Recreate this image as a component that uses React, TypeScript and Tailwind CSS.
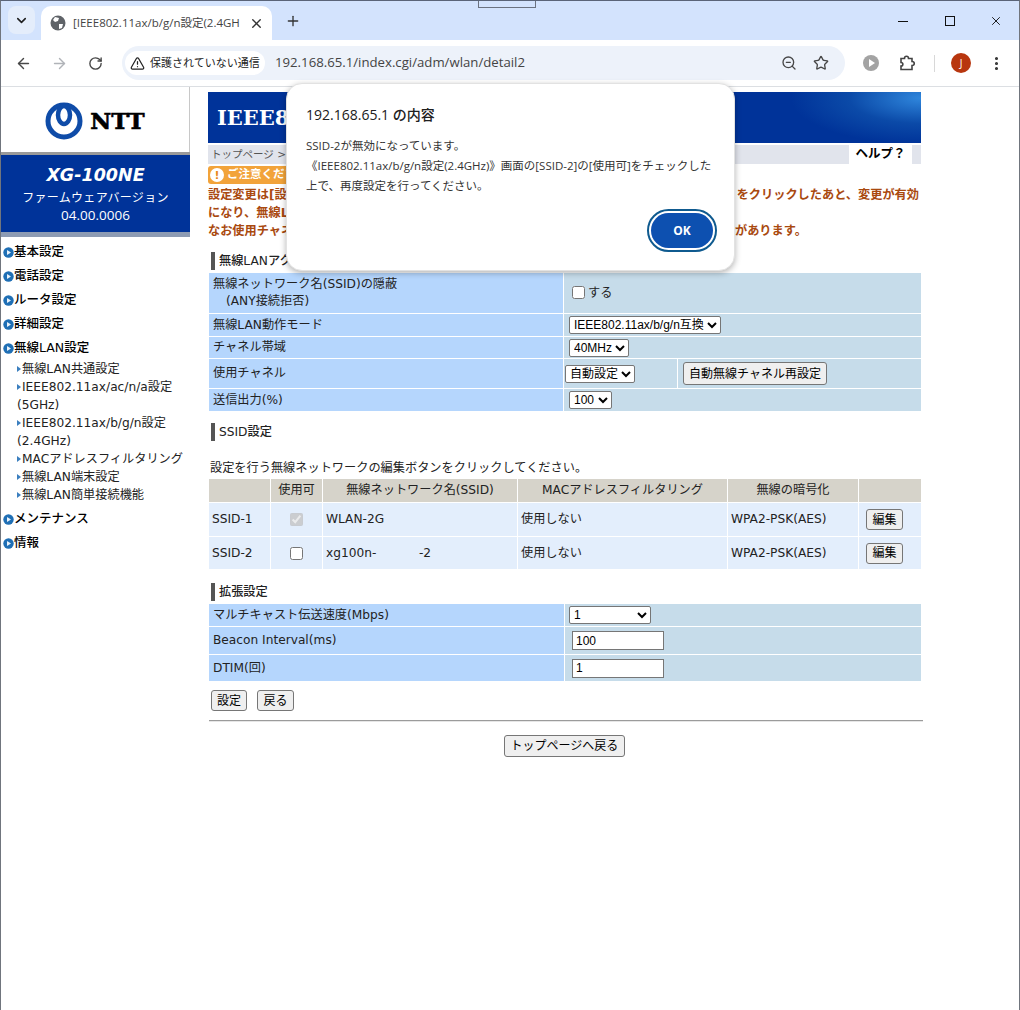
import { ArrowLeft, ArrowRight, ChevronDown, MoreVertical, Plus, RotateCw, Star, TriangleAlert, X, ZoomOut } from "lucide-react"

const mainMenu1 = ["基本設定", "電話設定", "ルータ設定", "詳細設定", "無線LAN設定"]
const subMenu = [
  "無線LAN共通設定",
  "IEEE802.11ax/ac/n/a設定 (5GHz)",
  "IEEE802.11ax/b/g/n設定 (2.4GHz)",
  "MACアドレスフィルタリング",
  "無線LAN端末設定",
  "無線LAN簡単接続機能",
]
const mainMenu2 = ["メンテナンス", "情報"]

function MenuItem({ label }: { label: string }) {
  return (
    <div className="flex h-[24px] items-center text-[12.5px] font-medium text-black">
      <svg width="11" height="11" viewBox="0 0 11 11" className="ml-[2px] shrink-0">
        <circle cx="5.5" cy="5.5" r="5.2" fill="#1f6fb5" />
        <path d="M4 3 L8 5.5 L4 8 Z" fill="#e8f2fb" />
      </svg>
      <span>{label}</span>
    </div>
  )
}

function Sidebar() {
  return (
    <div className="w-[189px] shrink-0">
      <div className="flex h-[65px] items-center justify-center gap-[7px] border-r border-[#c8c8c8] bg-white pt-[2px]">
        <svg width="38" height="38" viewBox="0 0 38 38">
          <circle cx="19" cy="19" r="16" fill="none" stroke="#0f4ca8" strokeWidth="5" />
          <ellipse cx="19" cy="13" rx="6" ry="9" fill="none" stroke="#0f4ca8" strokeWidth="4.5" />
        </svg>
        <span className="font-['DejaVu_Serif'] text-[23px] leading-none font-black text-black [-webkit-text-stroke:0.6px_black]">NTT</span>
      </div>
      <div className="h-[3px] bg-[#9a9a9a]" />
      <div className="flex h-[77px] flex-col items-center bg-[#003399] pt-[9px] text-white">
        <div className="text-[17.5px] leading-[22px] font-bold italic">XG-100NE</div>
        <div className="mt-[2px] font-['Noto_Sans_CJK_JP'] text-[12px] leading-[18px] tracking-[0.3px]">ファームウェアバージョン</div>
        <div className="font-['Open_Sans'] text-[13.5px] leading-[18px]">04.00.0006</div>
      </div>
      <div className="h-[5px] bg-[#8d9bb3]" />
      <div className="pt-[3px]">
        {mainMenu1.map((m) => (
          <MenuItem key={m} label={m} />
        ))}
        <div className="pb-[3px] pl-[15px] text-[12.2px] leading-[18px] text-[#222]">
          {subMenu.map((s) => (
            <div key={s} className="relative pl-[6px]">
              <span className="absolute top-[6px] left-[1px] h-0 w-0 border-y-[3px] border-l-[4px] border-y-transparent border-l-[#3b7fbf]" />
              {s.includes(" ") ? (
                <>
                  {s.split(" ")[0]}
                  <div className="-ml-[5px]">{s.split(" ")[1]}</div>
                </>
              ) : (
                s
              )}
            </div>
          ))}
        </div>
        {mainMenu2.map((m) => (
          <MenuItem key={m} label={m} />
        ))}
      </div>
    </div>
  )
}

function Heading({ label, className }: { label: string; className: string }) {
  return (
    <div className={`flex h-[18px] items-center gap-[4px] pl-[3px] text-[12.2px] font-medium text-[#222] ${className}`}>
      <span className="h-[18px] w-[4px] bg-[#555]" />
      {label}
    </div>
  )
}

function Select({ value, className }: { value: string; className: string }) {
  return (
    <select
      defaultValue={value}
      className={`h-[18px] rounded-[2px] border border-[#767676] bg-white font-['Liberation_Sans','Noto_Sans_CJK_JP',sans-serif] text-[12px] leading-none text-black ${className}`}
    >
      <option>{value}</option>
    </select>
  )
}

function Btn({ label, className }: { label: string; className: string }) {
  return (
    <button className={`rounded-[3px] border border-[#767676] bg-[#efefef] font-['Liberation_Sans','Noto_Sans_CJK_JP',sans-serif] text-[12px] leading-none text-black ${className}`}>
      {label}
    </button>
  )
}

function FormRow({ label, h, leftW = "w-[354px]", children }: { label: React.ReactNode; h: string; leftW?: string; children: React.ReactNode }) {
  return (
    <div className={`flex gap-px text-[12.2px] text-[#222] ${h}`}>
      <div className={`flex items-center bg-[#b5d6fd] pl-[4px] ${leftW}`}>{label}</div>
      <div className="flex flex-1 items-center bg-[#c6dcea]">{children}</div>
    </div>
  )
}

const ssidCols = ["w-[61px]", "w-[51px]", "w-[194px]", "w-[209px]", "w-[130px]", "flex-1"]

function SsidRow({ cells, h }: { cells: React.ReactNode[]; h: string }) {
  return (
    <div className={`flex gap-px text-[12.2px] text-[#222] ${h}`}>
      {cells.map((c, i) => (
        <div key={i} className={`flex items-center bg-[#e3eefc] ${ssidCols[i]} ${i === 1 ? "justify-center" : i === 5 ? "pl-[7px]" : "pl-[3px]"}`}>
          {c}
        </div>
      ))}
    </div>
  )
}

function MainContent() {
  return (
    <div className="ml-[18px] w-[713px] pt-[5px]">
      <div className="flex h-[51px] items-center bg-[#003399] bg-[radial-gradient(ellipse_130px_46px_at_100%_12%,#2f86dc,#0b4aa8_55%,#003399)] pl-[9px] font-['DejaVu_Serif','Noto_Sans_CJK_JP',serif] text-[21px] font-bold text-white">
        IEEE802.11ax/b/g/n設定(2.4GHz)
      </div>
      <div className="mt-[2px] flex h-[19px] items-center justify-between bg-[#e1e4ec] pl-[3px] text-[10.5px] text-[#555]">
        <span>トップページ &gt;</span>
        <span className="mr-[9px] flex h-[19px] w-[63px] items-center justify-center bg-white text-[12.5px] font-bold text-black">ヘルプ？</span>
      </div>
      <div className="mt-[2px] flex h-[18px] w-[160px] items-center gap-[3px] rounded-[3px] bg-[#f2a33a] pl-[2px] text-[11.5px] font-bold text-white">
        <span className="flex h-[14px] w-[14px] items-center justify-center rounded-full bg-white text-[11px] leading-none text-[#e8891c]">!</span>
        ご注意ください
      </div>
      <div className="mt-[2px] text-[12.2px] leading-[18px] font-bold text-[#a9490f]">
        <div className="flex justify-between"><span>設定変更は[設定]ボタンを</span><span className="mr-[2px]">をクリックしたあと、変更が有効</span></div>
        <div>になり、無線LAN接続が切断されます。</div>
        <div className="flex"><span className="w-[527px]">なお使用チャネルを変更すると</span><span>があります。</span></div>
      </div>

      <Heading label="無線LANアクセスポイント設定" className="mt-[12px]" />
      <div className="mt-[3px] ml-px flex flex-col gap-px">
        <FormRow
          h="h-[40px]"
          label={
            <div className="leading-[17px]">
              無線ネットワーク名(SSID)の隠蔽
              <div className="pl-[13px]">(ANY接続拒否)</div>
            </div>
          }
        >
          <input type="checkbox" className="mb-[2px] ml-[8px]" />
          <span className="ml-[3px]">する</span>
        </FormRow>
        <FormRow h="h-[22px]" label="無線LAN動作モード">
          <Select value="IEEE802.11ax/b/g/n互換" className="ml-[5px] w-[152px]" />
        </FormRow>
        <FormRow h="h-[21px]" label="チャネル帯域">
          <Select value="40MHz" className="ml-[5px] w-[60px]" />
        </FormRow>
        <FormRow h="h-[29px]" label="使用チャネル">
          <div className="flex h-full w-[114px] items-center border-r border-white">
            <Select value="自動設定" className="ml-[1px] w-[70px]" />
          </div>
          <Btn label="自動無線チャネル再設定" className="ml-[5px] h-[23px] w-[144px]" />
        </FormRow>
        <FormRow h="h-[22px]" label="送信出力(%)">
          <Select value="100" className="ml-[5px] w-[43px]" />
        </FormRow>
      </div>

      <Heading label="SSID設定" className="mt-[12px]" />
      <div className="mt-[18px] pl-[2px] text-[12.2px] leading-[18px] text-[#222]">設定を行う無線ネットワークの編集ボタンをクリックしてください。</div>
      <div className="mt-[2px] ml-px flex flex-col gap-px">
        <div className="flex h-[23px] gap-px text-[12.2px] text-[#222]">
          {["", "使用可", "無線ネットワーク名(SSID)", "MACアドレスフィルタリング", "無線の暗号化", ""].map((c, i) => (
            <div key={i} className={`flex items-center justify-center bg-[#d6d3ca] ${ssidCols[i]}`}>{c}</div>
          ))}
        </div>
        <SsidRow
          h="h-[33px]"
          cells={[
            "SSID-1",
            <input type="checkbox" checked disabled readOnly />,
            "WLAN-2G",
            "使用しない",
            "WPA2-PSK(AES)",
            <Btn label="編集" className="h-[21px] w-[37px]" />,
          ]}
        />
        <SsidRow
          h="h-[32px]"
          cells={[
            "SSID-2",
            <input type="checkbox" />,
            <span className="whitespace-pre">xg100n-           -2</span>,
            "使用しない",
            "WPA2-PSK(AES)",
            <Btn label="編集" className="h-[21px] w-[37px]" />,
          ]}
        />
      </div>

      <Heading label="拡張設定" className="mt-[14px]" />
      <div className="mt-[3px] ml-px flex flex-col gap-px">
        <FormRow h="h-[22px]" leftW="w-[355px]" label="マルチキャスト伝送速度(Mbps)">
          <Select value="1" className="ml-[4px] w-[82px]" />
        </FormRow>
        <FormRow h="h-[27px]" leftW="w-[355px]" label="Beacon Interval(ms)">
          <input defaultValue="100" className="ml-[7px] h-[19px] w-[92px] border border-[#767676] bg-white px-[3px] font-['Liberation_Sans',sans-serif] text-[12px] text-black" />
        </FormRow>
        <FormRow h="h-[26px]" leftW="w-[355px]" label="DTIM(回)">
          <input defaultValue="1" className="ml-[7px] h-[19px] w-[92px] border border-[#767676] bg-white px-[3px] font-['Liberation_Sans',sans-serif] text-[12px] text-black" />
        </FormRow>
      </div>
      <div className="mt-[9px] flex gap-[10px] pl-[3px]">
        <Btn label="設定" className="h-[21px] w-[36px]" />
        <Btn label="戻る" className="h-[21px] w-[37px]" />
      </div>
      <div className="mt-[9px] ml-px h-[2px] w-[714px] border-t border-[#9b9b9b] bg-[#e6e6e6]" />
      <div className="mt-[13px] flex justify-center">
        <Btn label="トップページへ戻る" className="h-[22px] w-[121px]" />
      </div>
    </div>
  )
}

function BrowserChrome() {
  return (
    <>
      <div className="relative flex h-[39px] bg-[#d3e3fd] pt-[5px]">
        <div className="absolute top-0 left-[477px] h-[7px] w-[58px] border border-t-0 border-[#6b7280]" />
        <div className="ml-[7px] flex h-[28px] w-[27px] items-center justify-center rounded-[8px] bg-[#e4edfb]">
          <ChevronDown size={15} strokeWidth={2.5} className="text-[#1f1f1f]" />
        </div>
        <div className="ml-[6px] flex h-[34px] w-[231px] items-center rounded-t-[10px] bg-white pl-[9px] text-[11.5px] text-[#444]">
          <svg width="16" height="16" viewBox="0 0 16 16" className="shrink-0">
            <circle cx="8" cy="8" r="7.5" fill="#5f6368" />
            <path d="M5 2 L9 3 L8 6 L5 7 L3 5 Z M9 9 L13 9 L12 13 L9 14 Z" fill="#fff" />
          </svg>
          <span className="ml-[7px] w-[168px] overflow-hidden whitespace-nowrap">[IEEE802.11ax/b/g/n設定(2.4GH</span>
          <X size={15} strokeWidth={2.2} className="ml-[8px] shrink-0 text-[#333]" />
        </div>
        <Plus size={16} strokeWidth={2} className="mt-[7px] ml-[13px] text-[#333]" />
        <div className="flex-1" />
        <div className="flex h-[30px] items-center text-[#111]">
          <span className="h-px w-[10px] bg-[#111]" />
          <span className="ml-[37px] h-[10px] w-[10px] border border-[#111]" />
          <X size={14} strokeWidth={1.6} className="mr-[16px] ml-[34px]" />
        </div>
      </div>
      <div className="flex h-[46px] items-center rounded-t-[8px] bg-white text-[#474747]">
        <ArrowLeft size={17} strokeWidth={2} className="ml-[14px]" />
        <ArrowRight size={17} strokeWidth={2} className="ml-[19px] text-[#b0b3b8]" />
        <RotateCw size={15} strokeWidth={2.2} className="ml-[20px]" />
        <div className="ml-[19px] flex h-[34px] w-[723px] items-center rounded-full bg-[#edf2fa] pl-[3px]">
          <div className="flex h-[24px] w-[140px] items-center rounded-full bg-white pl-[5px] text-[11px] text-[#222]">
            <TriangleAlert size={15} strokeWidth={2} className="shrink-0" />
            <span className="ml-[5px] whitespace-nowrap">保護されていない通信</span>
          </div>
          <span className="ml-[10px] text-[13.2px] text-[#444]">192.168.65.1/index.cgi/adm/wlan/detail2</span>
          <div className="flex-1" />
          <ZoomOut size={16} strokeWidth={2} />
          <Star size={16} strokeWidth={2} className="mr-[16px] ml-[16px]" />
        </div>
        <svg width="18" height="18" viewBox="0 0 18 18" className="ml-[17px]">
          <circle cx="9" cy="9" r="8" fill="#a3a3a3" />
          <path d="M7 5 L13 9 L7 13 Z" fill="#fff" />
        </svg>
        <svg width="18" height="18" viewBox="0 0 18 18" className="ml-[18px]" fill="none" stroke="#444" strokeWidth="1.6">
          <path d="M3 4.5 H6.5 C6.5 1.5 10.5 1.5 10.5 4.5 H14 V7.5 C17 7.5 17 11.5 14 11.5 V15.5 H3 V12 C5.5 12 5.5 8.5 3 8.5 Z" />
        </svg>
        <span className="ml-[18px] h-[17px] w-px bg-[#d8d8d8]" />
        <div className="ml-[16px] flex h-[20px] w-[20px] items-center justify-center rounded-full bg-[#b8360f] text-[10px] text-white">J</div>
        <MoreVertical size={17} strokeWidth={2.4} className="ml-[17px] text-[#333]" />
      </div>
      <div className="h-px bg-[#dcdfe3]" />
    </>
  )
}

function AlertDialog() {
  return (
    <div className="absolute top-[82px] left-[285px] h-[188px] w-[449px] rounded-[16px] border border-[#e2e2e2] bg-white pt-[21px] pl-[19px] font-['Open_Sans','Noto_Sans_CJK_JP',sans-serif] shadow-[0_2px_6px_rgba(0,0,0,0.3)]">
      <div className="text-[14px] leading-[20px] font-medium text-[#202020]">192.168.65.1 の内容</div>
      <div className="mt-[11px] text-[11.5px] leading-[20px] text-[#333]">
        <div>SSID-2が無効になっています。</div>
        <div>《IEEE802.11ax/b/g/n設定(2.4GHz)》画面の[SSID-2]の[使用可]をチェックした</div>
        <div>上で、再度設定を行ってください。</div>
      </div>
      <button className="absolute top-[129px] right-[21px] h-[35px] w-[62px] rounded-full bg-[#0d50b0] text-[12px] font-bold text-white outline-2 outline-offset-2 outline-[#0f5a8f]">
        OK
      </button>
    </div>
  )
}

export default function App() {
  return (
    <div className="relative h-[1010px] w-[1020px] overflow-hidden border-x border-t border-x-[#70757d] border-t-[#5a6478] bg-white font-['Open_Sans','Noto_Sans_CJK_JP',sans-serif]">
      <BrowserChrome />
      <div className="flex font-['DejaVu_Sans','Noto_Sans_CJK_JP',sans-serif]">
        <Sidebar />
        <MainContent />
      </div>
      <AlertDialog />
    </div>
  )
}
